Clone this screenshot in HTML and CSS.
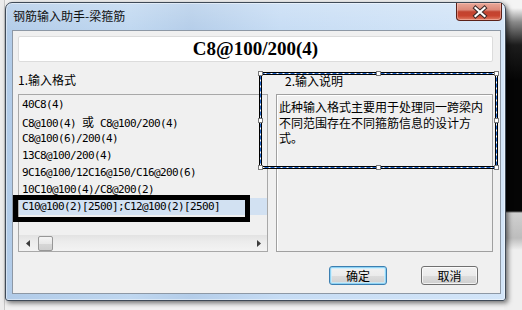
FILE: index.html
```html
<!DOCTYPE html>
<html lang="zh-CN">
<head>
<meta charset="utf-8">
<title>钢筋输入助手-梁箍筋</title>
<link rel="stylesheet" href="styles.css">
</head>
<body>
<div class="desk">
  <div class="bg-left"></div>
  <div class="bg-right"></div>
  <div class="win">
    <div class="titlebar">
      <span class="title">钢筋输入助手-梁箍筋</span>
      <div class="close">
        <svg width="46" height="18" viewBox="0 0 46 18">
          <path d="M18.5 5 L27.5 13 M27.5 5 L18.5 13" stroke="#3a2a28" stroke-width="4.2" stroke-linecap="square" fill="none"/>
          <path d="M18.5 5 L27.5 13 M27.5 5 L18.5 13" stroke="#ffffff" stroke-width="2.2" stroke-linecap="square" fill="none"/>
        </svg>
      </div>
    </div>
    <div class="client">
      <div class="formula">C8@100/200(4)</div>
      <div class="cols">
        <div class="col">
          <div class="label">1.输入格式</div>
          <div class="listbox">
            <ul class="items">
              <li>40C8(4)</li>
              <li>C8@100(4) <span class="cjk">或</span> C8@100/200(4)</li>
              <li>C8@100(6)/200(4)</li>
              <li>13C8@100/200(4)</li>
              <li>9C16@100/12C16@150/C16@200(6)</li>
              <li>10C10@100(4)/C8@200(2)</li>
              <li class="sel">C10@100(2)[2500];C12@100(2)[2500]</li>
            </ul>
            <div class="hscroll">
              <div class="arrow">
                <svg width="4" height="7" viewBox="0 0 4 7"><path d="M4 0 L0 3.5 L4 7 Z" fill="#3c3c3c"/></svg>
              </div>
              <div class="thumb"></div>
              <div class="track"></div>
              <div class="arrow">
                <svg width="4" height="7" viewBox="0 0 4 7"><path d="M0 0 L4 3.5 L0 7 Z" fill="#3c3c3c"/></svg>
              </div>
            </div>
          </div>
        </div>
        <div class="col">
          <div class="label label-right">2.输入说明</div>
          <div class="desc">此种输入格式主要用于处理同一跨梁内不同范围存在不同箍筋信息的设计方式。</div>
        </div>
      </div>
      <div class="buttons">
        <button class="btn default">确定</button>
        <button class="btn">取消</button>
      </div>
    </div>
  </div>
  <div class="annot"></div>
  <svg class="selrect" width="243" height="101" viewBox="0 0 243 101">
    <rect x="3.5" y="3.5" width="236" height="94" fill="none" stroke="#000" stroke-width="3"/>
    <rect x="3.5" y="3.5" width="236" height="94" fill="none" stroke="#ffffff" stroke-width="1"/>
    <rect x="3.5" y="3.5" width="236" height="94" fill="none" stroke="#1f64c8" stroke-width="1" stroke-dasharray="4 2"/>
    <g fill="#ffffff" stroke="#7a7a7a" stroke-width="1">
      <rect x="1.5" y="1.5" width="4" height="4"/>
      <rect x="119.5" y="1.5" width="4" height="4"/>
      <rect x="237.5" y="1.5" width="4" height="4"/>
      <rect x="1.5" y="48.5" width="4" height="4"/>
      <rect x="237.5" y="48.5" width="4" height="4"/>
      <rect x="1.5" y="95.5" width="4" height="4"/>
      <rect x="119.5" y="95.5" width="4" height="4"/>
      <rect x="237.5" y="95.5" width="4" height="4"/>
    </g>
  </svg>
</div>
</body>
</html>
```

FILE: styles.css
```css
html, body {
  margin: 0;
  padding: 0;
}

.desk {
  position: relative;
  width: 522px;
  height: 310px;
  overflow: hidden;
  background: #f1f1f1;
  font-family: "Noto Sans CJK SC", "Liberation Sans", sans-serif;
  font-size: 12px;
  color: #000;
}

.bg-left {
  position: absolute;
  left: 0;
  top: 0;
  width: 5px;
  height: 310px;
  background: #ececec;
  border-right: 1px solid #c8c8c8;
  box-sizing: border-box;
}

.bg-right {
  position: absolute;
  left: 504px;
  top: 0;
  width: 18px;
  height: 310px;
  background: linear-gradient(to bottom, #f4f4f4 0, #f4f4f4 8px, #8a8a8a 22px, #1c1c1c 45px, #050505 80px, #050505 211px, #d0d0d0 213px, #bdbdbd 238px, #efefef 250px, #efefef 310px);
}

.win {
  position: absolute;
  left: 5px;
  top: 2px;
  width: 501px;
  height: 299px;
  box-sizing: border-box;
  border: 1px solid #3f4a57;
  border-radius: 7px 7px 3px 3px;
  padding: 0 4px 6px 6px;
  display: flex;
  flex-direction: column;
  background:
    linear-gradient(to bottom, rgba(255,255,255,0.2), rgba(255,255,255,0) 30px),
    linear-gradient(to right, #b1cbe8 0%, #bfd7f0 25%, #b4cde9 37%, #c6dcf4 55%, #d3e5f8 100%);
  box-shadow: 2px 2px 5px rgba(0, 0, 0, 0.55), inset 0 0 0 1px rgba(255,255,255,0.45);
}

.titlebar {
  position: relative;
  height: 27px;
  flex: none;
  box-sizing: border-box;
  padding: 5px 0 0 1px;
  line-height: 16px;
}

.title {
  color: #111;
  font-size: 12px;
}

.close {
  position: absolute;
  top: 0;
  right: -1px;
  width: 46px;
  height: 18px;
  box-sizing: border-box;
  border: 1px solid #5b2119;
  border-top: none;
  border-radius: 0 0 4px 4px;
  background: linear-gradient(to bottom, #e9a899 0%, #dc8a7a 40%, #c2432f 52%, #c8442f 75%, #e07e66 100%);
  box-shadow: inset 0 0 0 1px rgba(255, 210, 200, 0.45);
}

.close svg {
  display: block;
}

.client {
  flex: 1;
  min-height: 0;
  border: 1px solid #8d98a5;
  background: #f0f0f0;
  display: flex;
  flex-direction: column;
}

.formula {
  margin: 5px 7px 0 5px;
  height: 26px;
  box-sizing: border-box;
  border: 1px solid #dcdcdc;
  border-radius: 2px;
  background: #fff;
  font-family: "Liberation Serif", serif;
  font-weight: bold;
  font-size: 19px;
  line-height: 24px;
  text-align: center;
}

.cols {
  display: grid;
  grid-template-columns: 250px 217px;
  column-gap: 8px;
  margin: 10px 0 0 5px;
}

.label {
  height: 22px;
  line-height: 16px;
  font-size: 12px;
}

.label-right {
  height: 22px;
  padding-left: 9px;
  line-height: 18px;
}

.listbox {
  height: 158px;
  box-sizing: border-box;
  border: 1px solid #a8a8a8;
  display: flex;
  flex-direction: column;
  background: #f0f0f0;
  overflow: hidden;
}

.items {
  flex: 1;
  margin: 0;
  padding: 1px 0 0;
  list-style: none;
  font-family: "DejaVu Sans Mono", "Liberation Mono", monospace;
  font-size: 11px;
  letter-spacing: -0.62px;
  color: #000;
}

.items li {
  height: 17px;
  line-height: 17px;
  padding-left: 3px;
  white-space: nowrap;
}

.items li.sel {
  background: #d2e1f2;
}

.cjk {
  font-family: "Noto Sans CJK SC", sans-serif;
  font-size: 12px;
  letter-spacing: 0;
}

.hscroll {
  height: 16px;
  flex: none;
  display: flex;
  align-items: center;
  background: linear-gradient(to bottom, #e2e2e2 0%, #ececec 40%, #f3f3f3 100%);
}

.arrow {
  width: 17px;
  height: 16px;
  display: flex;
  align-items: center;
  justify-content: center;
  flex: none;
}

.arrow svg {
  display: block;
}

.thumb {
  width: 15px;
  height: 15px;
  margin-left: 2px;
  box-sizing: border-box;
  border: 1px solid #979797;
  border-radius: 2px;
  background: linear-gradient(to bottom, #f4f4f4 0%, #e8e8e8 50%, #d7d7d7 51%, #cfcfcf 100%);
  flex: none;
}

.track {
  flex: 1;
}

.desc {
  height: 158px;
  box-sizing: border-box;
  border: 1px solid #a0a0a0;
  box-shadow: inset 1px 1px 0 #ffffff;
  padding: 4px 2px 0 2px;
  line-height: 15.5px;
  font-size: 12px;
  background: #f0f0f0;
}

.buttons {
  display: flex;
  justify-content: flex-end;
  gap: 34px;
  padding-right: 22px;
  margin-top: 14px;
}

.btn {
  width: 57px;
  height: 19px;
  box-sizing: border-box;
  padding: 0;
  margin: 0;
  border: 1px solid #707070;
  border-radius: 3px;
  background: linear-gradient(to bottom, #f2f2f2 0%, #ebebeb 50%, #dddddd 51%, #cfcfcf 100%);
  font-family: "Noto Sans CJK SC", sans-serif;
  font-size: 12px;
  line-height: 17px;
  color: #000;
  box-shadow: inset 0 0 0 1px rgba(255,255,255,0.7);
}

.btn.default {
  width: 58px;
  border-color: #3c7fb1;
  box-shadow: inset 0 0 0 1px #8fd3f4, inset 0 0 0 2px rgba(200, 238, 255, 0.7);
}

.annot {
  position: absolute;
  left: 13px;
  top: 195px;
  width: 237px;
  height: 27px;
  box-sizing: border-box;
  border: 5px solid #000;
}

.selrect {
  position: absolute;
  left: 257px;
  top: 70px;
  display: block;
}
```
